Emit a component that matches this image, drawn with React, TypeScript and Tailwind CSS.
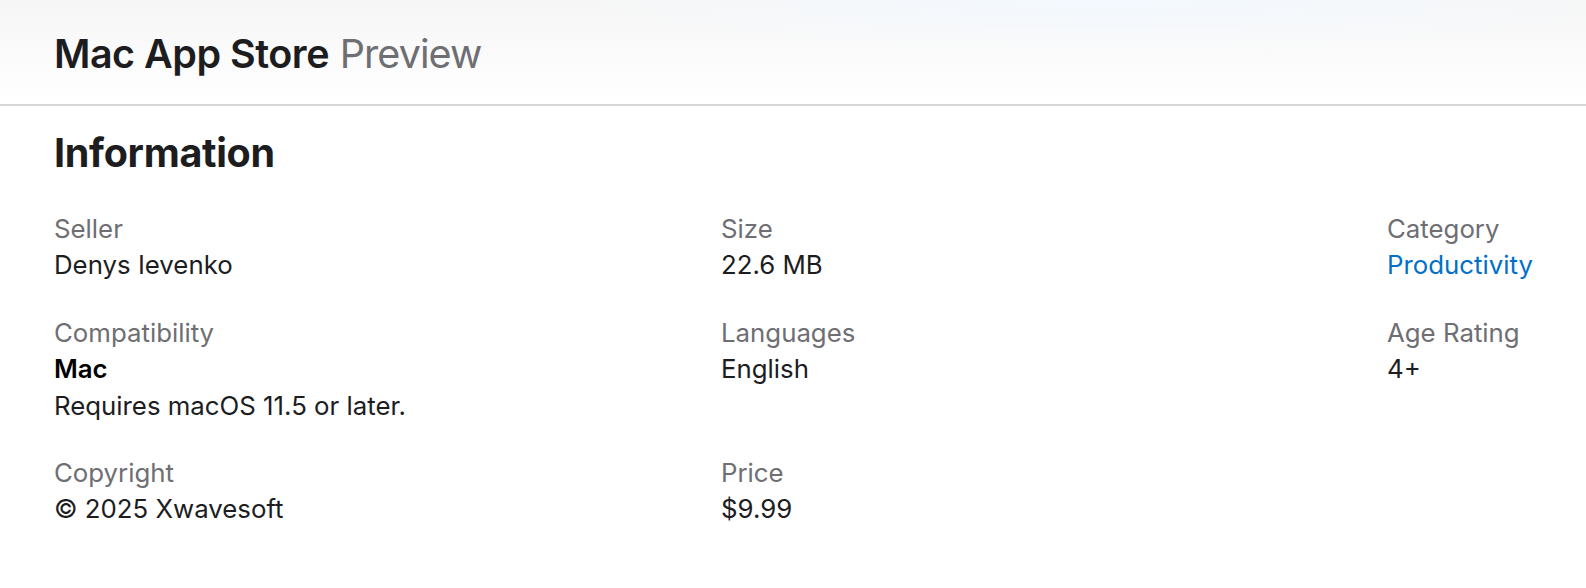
const font = { fontFamily: 'Inter, "Noto Sans", sans-serif' };

type Line = { text: string; kind?: 'bold' | 'link' };
type Item = { label: string; lines: Line[] } | null;

// laid out row by row, three columns
const items: Item[] = [
  { label: 'Seller', lines: [{ text: 'Denys Ievenko' }] },
  { label: 'Size', lines: [{ text: '22.6 MB' }] },
  { label: 'Category', lines: [{ text: 'Productivity', kind: 'link' }] },
  {
    label: 'Compatibility',
    lines: [{ text: 'Mac', kind: 'bold' }, { text: 'Requires macOS 11.5 or later.' }],
  },
  { label: 'Languages', lines: [{ text: 'English' }] },
  { label: 'Age Rating', lines: [{ text: '4+' }] },
  { label: 'Copyright', lines: [{ text: '© 2025 Xwavesoft' }] },
  { label: 'Price', lines: [{ text: '$9.99' }] },
  null,
];

function InfoItem({ item }: { item: Item }) {
  if (!item) return <div />;
  return (
    <div className="pb-[31px] whitespace-nowrap">
      <dt className="text-[25.8px] leading-[36.4px] text-[#6e6e73]">{item.label}</dt>
      {item.lines.map((l, i) => (
        <dd
          key={i}
          className={
            l.kind === 'bold'
              ? 'text-[25.8px] leading-[36.4px] font-semibold text-black'
              : l.kind === 'link'
              ? 'text-[25.8px] leading-[36.4px] text-[#0070c9]'
              : 'text-[25.8px] leading-[36.4px] text-[#1d1d1f]'
          }
        >
          {l.text}
        </dd>
      ))}
    </div>
  );
}

export default function App() {
  return (
    <div className="w-[1586px] h-[588px] bg-white overflow-hidden" style={font}>
      {/* Header */}
      <header className="h-[106px] border-b-2 border-[#d6d6d6] bg-[radial-gradient(ellipse_at_70%_0%,#f3f9ff_0%,rgba(255,255,255,0)_35%),linear-gradient(to_bottom,#f6f6f6,#ffffff)] flex items-center px-[54px]">
        <h1 className="text-[39.5px] tracking-[-0.5px] leading-none pt-[5px]">
          <span className="font-semibold text-[#1d1d1f]">Mac App Store</span>{' '}
          <span className="text-[#6e6e73] tracking-[-0.9px]">Preview</span>
        </h1>
      </header>

      {/* Information */}
      <section className="px-[54px] pt-[25px]">
        <h2 className="text-[39.5px] leading-[44px] font-bold text-[#1d1d1f] tracking-[-0.3px]">
          Information
        </h2>
        <dl className="grid grid-cols-[667px_666px_200px] mt-[36px]">
          {items.map((item, i) => (
            <InfoItem key={i} item={item} />
          ))}
        </dl>
      </section>
    </div>
  );
}
